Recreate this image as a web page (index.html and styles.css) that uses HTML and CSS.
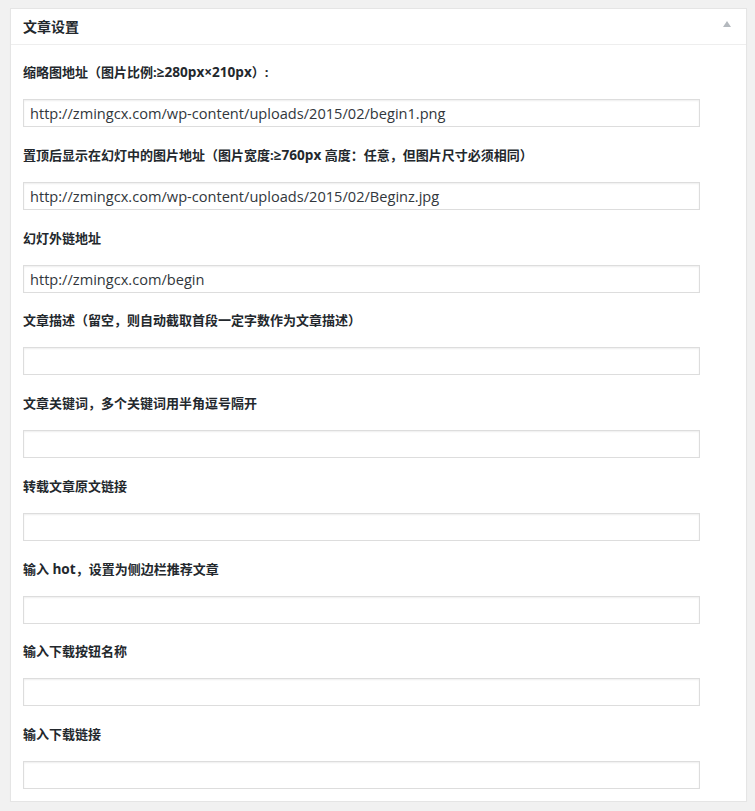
FILE: index.html
```html
<!DOCTYPE html>
<html>
<head>
<meta charset="utf-8">
<link rel="stylesheet" href="styles.css">
</head>
<body>
<div class="postbox">
  <div class="postbox-header">
    <h2 class="postbox-title">文章设置</h2>
    <span class="toggle"><svg width="8" height="6" viewBox="0 0 8 6"><path d="M0 6 L4 0 L8 6 Z" fill="#b4b9be"/></svg></span>
  </div>
  <div class="inside">
    <div class="field">
      <label class="field-label">缩略图地址（图片比例:<span class="latin">≥280px×210px</span>）:</label>
      <input class="field-input" type="text" value="http://zmingcx.com/wp-content/uploads/2015/02/begin1.png">
    </div>
    <div class="field">
      <label class="field-label">置顶后显示在幻灯中的图片地址（图片宽度:<span class="latin">≥760px</span> 高度：任意，但图片尺寸必须相同）</label>
      <input class="field-input" type="text" value="http://zmingcx.com/wp-content/uploads/2015/02/Beginz.jpg">
    </div>
    <div class="field">
      <label class="field-label">幻灯外链地址</label>
      <input class="field-input" type="text" value="http://zmingcx.com/begin">
    </div>
    <div class="field">
      <label class="field-label">文章描述（留空，则自动截取首段一定字数作为文章描述）</label>
      <input class="field-input" type="text" value="">
    </div>
    <div class="field">
      <label class="field-label">文章关键词，多个关键词用半角逗号隔开</label>
      <input class="field-input" type="text" value="">
    </div>
    <div class="field">
      <label class="field-label">转载文章原文链接</label>
      <input class="field-input" type="text" value="">
    </div>
    <div class="field">
      <label class="field-label">输入 <span class="latin">hot</span>，设置为侧边栏推荐文章</label>
      <input class="field-input" type="text" value="">
    </div>
    <div class="field">
      <label class="field-label">输入下载按钮名称</label>
      <input class="field-input" type="text" value="">
    </div>
    <div class="field">
      <label class="field-label">输入下载链接</label>
      <input class="field-input" type="text" value="">
    </div>
  </div>
</div>
</body>
</html>
```
FILE: styles.css
```css
html, body {
  margin: 0;
  padding: 0;
  background: #f1f1f1;
}
body {
  padding: 8px 8px 0 10px;
  font-family: "Open Sans", "Noto Sans CJK SC", sans-serif;
  color: #23282d;
}
.postbox {
  width: 735px;
  background: #fff;
  border: 1px solid #e5e5e5;
  box-shadow: 0 1px 1px rgba(0,0,0,0.04);
}
.postbox-header {
  height: 35px;
  border-bottom: 1px solid #eee;
  display: flex;
  align-items: center;
  justify-content: space-between;
  padding: 0 15px 0 12px;
}
.postbox-title {
  margin: 0;
  font-size: 14px;
  font-weight: 700;
  line-height: 20px;
}
.toggle {
  display: flex;
  align-items: center;
  margin-top: -6px;
}
.inside {
  padding: 17px 12px 12px 12px;
}
.field {
  display: flex;
  flex-direction: column;
  align-items: flex-start;
  padding-bottom: 17.75px;
}
.field:last-child {
  padding-bottom: 0;
}
.field-label {
  font-size: 13px;
  font-weight: 700;
  line-height: 20px;
  color: #23282d;
  margin-bottom: 17px;
}
.latin {
  font-size: 13.6px;
}
.field-input {
  box-sizing: border-box;
  width: 677px;
  height: 28px;
  margin: 0;
  padding: 0 6px;
  border: 1px solid #ddd;
  box-shadow: inset 0 1px 2px rgba(0,0,0,0.07);
  background: #fff;
  font-family: "Open Sans", sans-serif;
  font-size: 14.6px;
  color: #32373c;
  outline: none;
}
```
